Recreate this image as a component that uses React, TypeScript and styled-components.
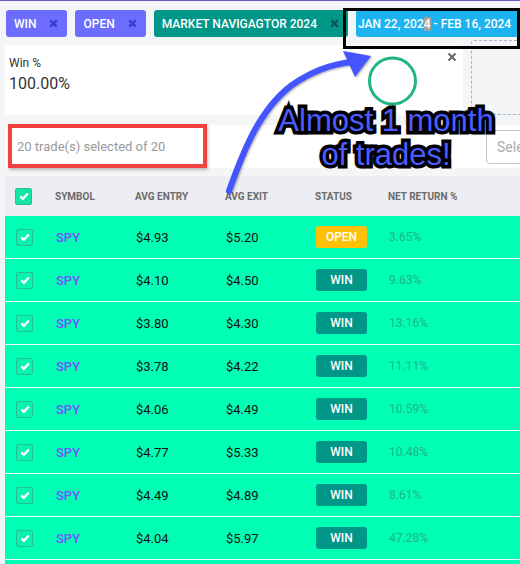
import React from "react";
import styled, { createGlobalStyle } from "styled-components";

const GlobalStyle = createGlobalStyle`
  html, body {
    margin: 0;
    padding: 0;
    background: #f4f5f7;
    font-family: Roboto, "Liberation Sans", Arial, sans-serif;
  }
  * {
    box-sizing: border-box;
  }
`;

type Trade = {
  entry: string;
  exit: string;
  status: "OPEN" | "WIN";
  ret: string;
};

const trades: Trade[] = [
  { entry: "$4.93", exit: "$5.20", status: "OPEN", ret: "3.65%" },
  { entry: "$4.10", exit: "$4.50", status: "WIN", ret: "9.63%" },
  { entry: "$3.80", exit: "$4.30", status: "WIN", ret: "13.16%" },
  { entry: "$3.78", exit: "$4.22", status: "WIN", ret: "11.11%" },
  { entry: "$4.06", exit: "$4.49", status: "WIN", ret: "10.59%" },
  { entry: "$4.77", exit: "$5.33", status: "WIN", ret: "10.48%" },
  { entry: "$4.49", exit: "$4.89", status: "WIN", ret: "8.61%" },
  { entry: "$4.04", exit: "$5.97", status: "WIN", ret: "47.28%" }
];

const Page = styled.div`
  position: relative;
  width: 520px;
  height: 564px;
  overflow: hidden;
  border-top: 1px solid #6a5acd;
`;

const ChipRow = styled.div`
  display: flex;
  gap: 8px;
  padding: 9px 0 0 6px;
  white-space: nowrap;
`;

const Chip = styled.div<{ $bg: string }>`
  display: flex;
  align-items: center;
  flex-shrink: 0;
  height: 27px;
  padding: 0 9px 0 8px;
  gap: 13px;
  border-radius: 3px;
  background: ${(p) => p.$bg};
  color: #fff;
  font-size: 12px;
  font-weight: 500;
  text-transform: uppercase;
`;

const DateChip = styled(Chip)`
  padding: 0 0 0 2px;
  width: 166px;
`;

const Caret = styled.span`
  background: #9ea3a8;
`;

const ChipClose = ({ color }: { color: string }) => (
  <svg width="9" height="9" viewBox="0 0 9 9">
    <path d="M1.3 1.3 L7.7 7.7 M7.7 1.3 L1.3 7.7" stroke={color} strokeWidth="2.4" />
  </svg>
);

const CardRow = styled.div`
  display: flex;
  gap: 8px;
  padding-left: 5px;
  margin-top: 8px;
`;

const StatCard = styled.div`
  position: relative;
  flex: 0 0 458px;
  height: 70px;
  background: #fff;
  border-radius: 4px;
  padding: 10px 4px;
  color: #333;
`;

const StatLabel = styled.div`
  font-size: 12px;
  line-height: 16px;
`;

const StatValue = styled.div`
  font-size: 16px;
  line-height: 22px;
  margin-top: 2px;
`;

const CardClose = styled.div`
  position: absolute;
  top: 7px;
  right: 6px;
  display: flex;
`;

const DropZone = styled.div`
  flex: 0 0 80px;
  height: 75px;
  margin-top: -5px;
  border: 1px dashed #aab0d0;
  border-radius: 3px;
`;

const SelectionBar = styled.div`
  display: flex;
  align-items: center;
  gap: 12px;
  margin: 10px 0 0 5px;
  height: 43px;
  background: #fff;
  border-radius: 3px;
`;

const SelectionText = styled.div`
  flex: 0 0 469px;
  padding-left: 12px;
  color: #9a9a9a;
  font-size: 13px;
`;

const SelectInput = styled.div`
  flex: 0 0 120px;
  height: 34px;
  border: 1px solid #c6c6c6;
  border-radius: 4px;
  padding-left: 10px;
  display: flex;
  align-items: center;
  color: #aaa;
  font-size: 14px;
`;

const Table = styled.div`
  margin: 8px 0 0 5px;
`;

const gridCols = "40px 80px 90px 90px 73px 1fr";

const HeaderRow = styled.div`
  display: grid;
  grid-template-columns: ${gridCols};
  align-items: center;
  height: 40px;
  padding-left: 10px;
  background: #eceef3;
  color: #6b6b6b;
  font-size: 10px;
  font-weight: 700;
  text-transform: uppercase;
`;

const Row = styled.div`
  display: grid;
  grid-template-columns: ${gridCols};
  align-items: center;
  height: 43px;
  padding-left: 10px;
  background: #00ffb4;
  border-bottom: 1px solid #f2fbf7;
  font-size: 13px;
  color: #111;
`;

const Box = styled.div<{ $filled?: boolean }>`
  width: 17px;
  height: 17px;
  border-radius: 2px;
  border: 1px solid #2bbd8c;
  background: ${(p) => (p.$filled ? "#12e6a2" : "#05f5b0")};
  display: flex;
  align-items: center;
  justify-content: center;
  margin-left: ${(p) => (p.$filled ? "0" : "1px")};
`;

const Check = ({ filled }: { filled?: boolean }) => (
  <Box $filled={filled}>
    <svg width="12" height="12" viewBox="0 0 12 12">
      <path d="M2.3 6.3 L4.9 8.8 L9.8 3.4" stroke="#fff" strokeWidth="2.3" fill="none" />
    </svg>
  </Box>
);

const Symbol = styled.span`
  color: #7c4dff;
  font-weight: 500;
  padding-left: 1px;
`;

const Cell = styled.span`
  padding-left: 1px;
`;

const Badge = styled.span<{ $status: "OPEN" | "WIN" }>`
  display: inline-flex;
  align-items: center;
  justify-content: center;
  width: 51px;
  height: 22px;
  border-radius: 3px;
  margin-left: 1px;
  background: ${(p) => (p.$status === "OPEN" ? "#ffc107" : "#009688")};
  color: #fff;
  font-size: 12px;
  font-weight: 500;
`;

const Return = styled.span`
  color: #1fb38d;
  font-size: 12px;
  padding-left: 1px;
`;

/* annotation layer drawn over the screenshot */
const DateHighlight = styled.div`
  position: absolute;
  left: 343px;
  top: 7px;
  width: 177px;
  height: 41px;
  border: 3px solid #000;
`;

const RedFrame = styled.div`
  position: absolute;
  left: 8px;
  top: 123px;
  width: 199px;
  height: 44px;
  border: 4px solid #f24141;
  box-shadow: 1px 2px 3px rgba(0, 0, 0, 0.25);
`;

const Overlay = styled.svg`
  position: absolute;
  left: 0;
  top: 0;
  pointer-events: none;
`;

const Callout = styled.div`
  position: absolute;
  left: 256px;
  top: 103px;
  width: 260px;
  text-align: center;
  font-family: "Liberation Sans", Arial, sans-serif;
  font-size: 31px;
  line-height: 34px;
  color: #4a5cff;
  -webkit-text-stroke: 7px #000;
  paint-order: stroke fill;
  text-shadow: 0 0 4px rgba(0, 0, 0, 0.6);
`;

export default function App() {
  return (
    <Page>
      <GlobalStyle />
      <ChipRow>
        <Chip $bg="#6c6cff">
          WIN
          <ChipClose color="#3b3bd0" />
        </Chip>
        <Chip $bg="#6c6cff">
          OPEN
          <ChipClose color="#3b3bd0" />
        </Chip>
        <Chip $bg="#009688">
          MARKET NAVIGAGTOR 2024
          <ChipClose color="#0b5a4f" />
        </Chip>
        <DateChip $bg="#1cb3f1">
          <span>
            JAN 22, 202<Caret>4</Caret> - FEB 16, 2024
          </span>
        </DateChip>
      </ChipRow>

      <CardRow>
        <StatCard>
          <StatLabel>Win %</StatLabel>
          <StatValue>100.00%</StatValue>
          <CardClose>
            <svg width="10" height="10" viewBox="0 0 10 10">
              <path d="M1.5 1.5 L8.5 8.5 M8.5 1.5 L1.5 8.5" stroke="#666" strokeWidth="2" />
            </svg>
          </CardClose>
        </StatCard>
        <DropZone />
      </CardRow>

      <SelectionBar>
        <SelectionText>20 trade(s) selected of 20</SelectionText>
        <SelectInput>Select...</SelectInput>
      </SelectionBar>

      <Table>
        <HeaderRow>
          <Check filled />
          <span>Symbol</span>
          <span>Avg Entry</span>
          <span>Avg Exit</span>
          <span>Status</span>
          <span>Net Return %</span>
        </HeaderRow>
        {trades.map((t, i) => (
          <Row key={i}>
            <Check />
            <Symbol>SPY</Symbol>
            <Cell>{t.entry}</Cell>
            <Cell>{t.exit}</Cell>
            <span>
              <Badge $status={t.status}>{t.status}</Badge>
            </span>
            <Return>{t.ret}</Return>
          </Row>
        ))}
        {/* next row, scrolled just below the fold */}
        <Row />
      </Table>

      <DateHighlight />
      <RedFrame />
      <Overlay width="520" height="564" viewBox="0 0 520 564">
        <circle cx="392.5" cy="80" r="23" fill="none" stroke="#20b582" strokeWidth="3" />
        <g style={{ filter: "drop-shadow(1px 1px 1px rgba(0,0,0,0.35))" }}>
          <path
            d="M229 190 C 244 148, 260 108, 292 84 C 312 70, 332 63, 352 61"
            fill="none"
            stroke="#4455ff"
            strokeWidth="6"
            strokeLinecap="round"
          />
          <polygon points="343,50 371,55 355,76" fill="#4455ff" />
        </g>
      </Overlay>
      <Callout>
        Almost 1 month
        <br />
        of trades!
      </Callout>
    </Page>
  );
}
